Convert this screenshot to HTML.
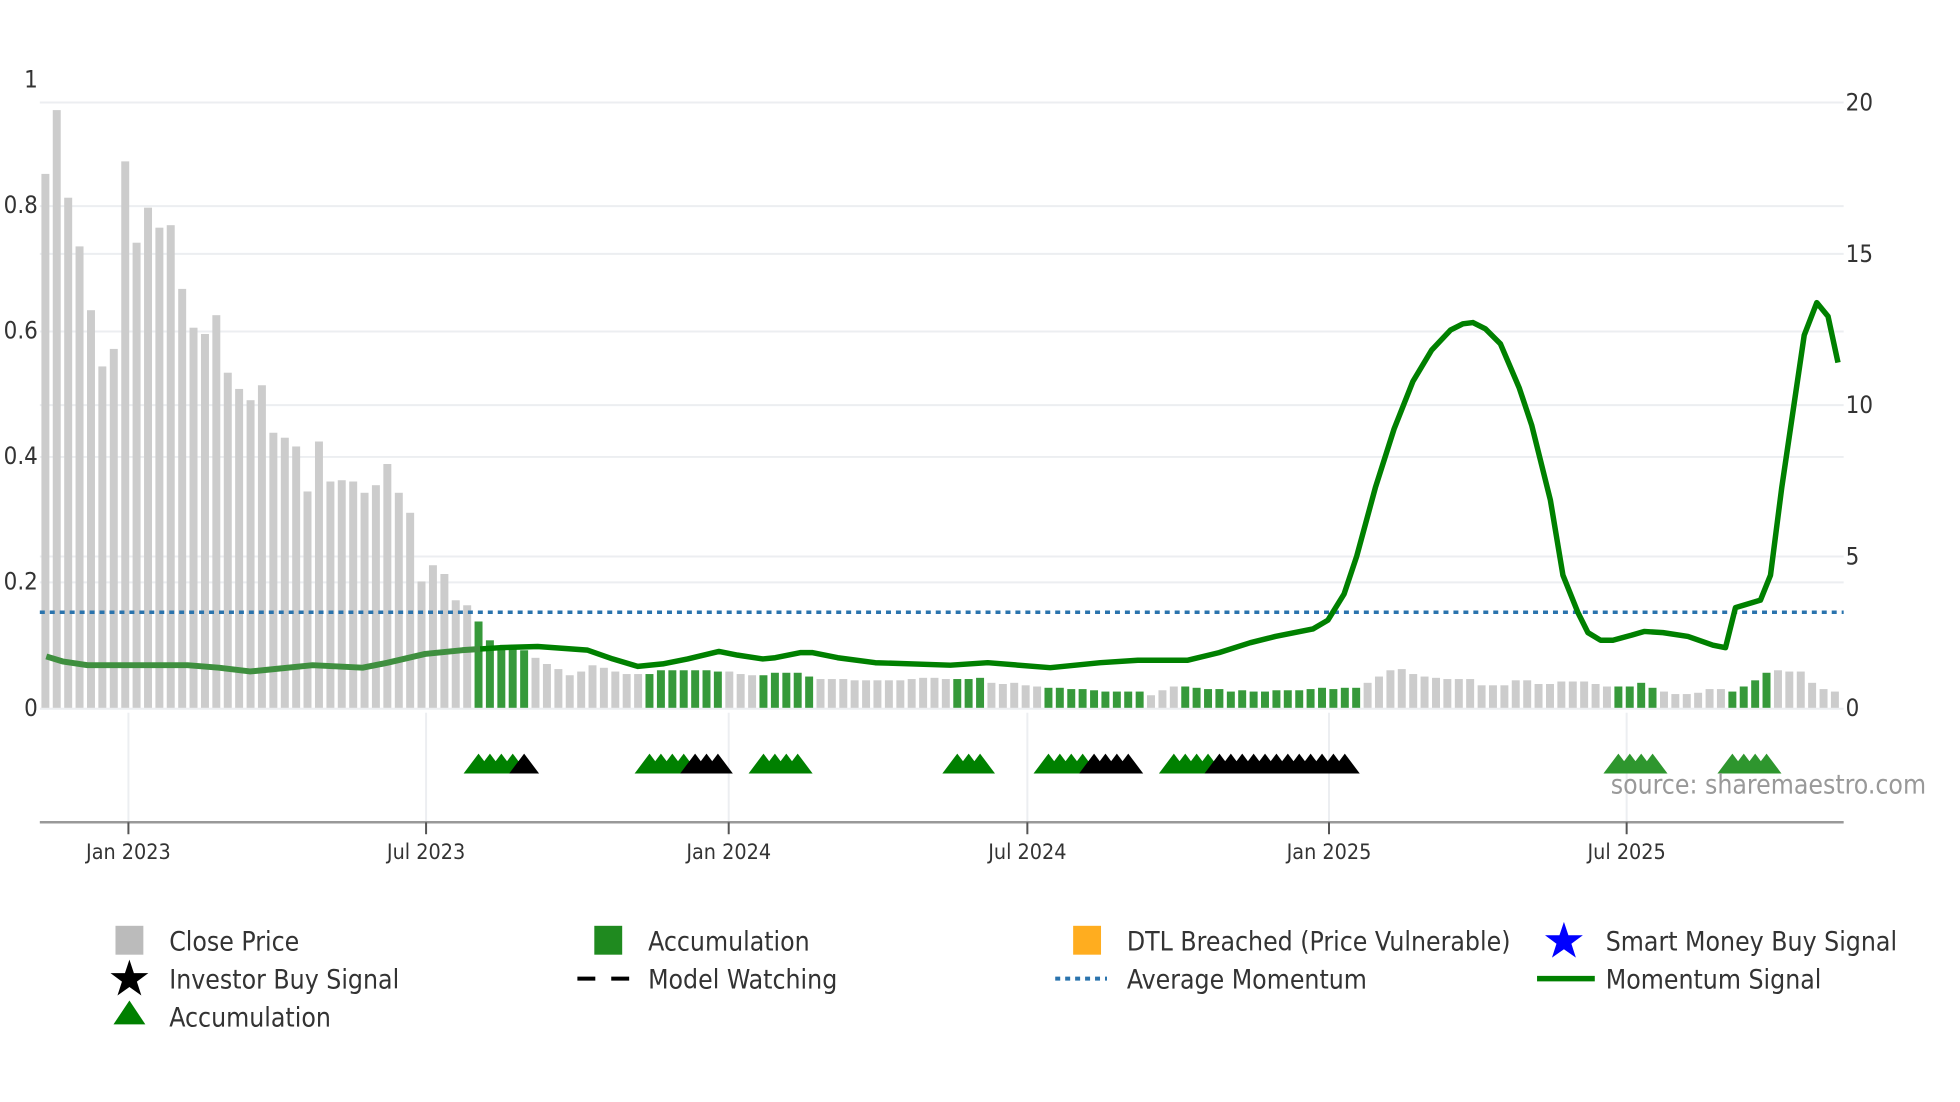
<!DOCTYPE html>
<html><head><meta charset="utf-8">
<style>
html,body{margin:0;padding:0;background:#fff;}
svg{display:block;}
text{font-family:"DejaVu Sans Condensed","DejaVu Sans","Liberation Sans",sans-serif;fill:#333;}
</style></head>
<body>
<svg id="s" width="1960" height="1102" viewBox="0 0 1960 1102" xmlns="http://www.w3.org/2000/svg">
<rect width="1960" height="1102" fill="#fff"/>
<g transform="scale(0.9955)">
<g stroke="#eceef1" stroke-width="2">
<line x1="40" x2="1852" y1="103" y2="103"/>
<line x1="40" x2="1852" y1="207" y2="207"/>
<line x1="40" x2="1852" y1="255" y2="255"/>
<line x1="40" x2="1852" y1="333" y2="333"/>
<line x1="40" x2="1852" y1="407" y2="407"/>
<line x1="40" x2="1852" y1="459" y2="459"/>
<line x1="40" x2="1852" y1="559" y2="559"/>
<line x1="40" x2="1852" y1="585" y2="585"/>
<line x1="40" x2="1852" y1="712" y2="712"/>
</g>
<g stroke="#eceef1" stroke-width="2">
<line x1="129" x2="129" y1="716" y2="826"/>
<line x1="428" x2="428" y1="716" y2="826"/>
<line x1="732" x2="732" y1="716" y2="826"/>
<line x1="1032" x2="1032" y1="716" y2="826"/>
<line x1="1335" x2="1335" y1="716" y2="826"/>
<line x1="1634" x2="1634" y1="716" y2="826"/>
</g>
<g id="bars"></g>
<line x1="40" x2="1852" y1="615" y2="615" stroke="#2a73ad" stroke-width="3.5" stroke-dasharray="5 5"/>
<polyline id="mom1" fill="none" stroke="#3f8f3f" stroke-width="6" stroke-linejoin="round"/>
<polyline id="mom2" fill="none" stroke="#008000" stroke-width="5.5" stroke-linejoin="round"/>
<g id="tris"></g>
<line x1="40" x2="1852" y1="826" y2="826" stroke="#999" stroke-width="2.5"/>
<g stroke="#555" stroke-width="2">
<line x1="129" x2="129" y1="826" y2="838"/>
<line x1="428" x2="428" y1="826" y2="838"/>
<line x1="732" x2="732" y1="826" y2="838"/>
<line x1="1032" x2="1032" y1="826" y2="838"/>
<line x1="1335" x2="1335" y1="826" y2="838"/>
<line x1="1634" x2="1634" y1="826" y2="838"/>
</g>
<g font-size="21.5" text-anchor="middle">
<text x="129" y="863">Jan 2023</text>
<text x="428" y="863">Jul 2023</text>
<text x="732" y="863">Jan 2024</text>
<text x="1032" y="863">Jul 2024</text>
<text x="1335" y="863">Jan 2025</text>
<text x="1634" y="863">Jul 2025</text>
</g>
<g font-size="24" text-anchor="end">
<text x="38" y="88">1</text>
<text x="38" y="214">0.8</text>
<text x="38" y="340">0.6</text>
<text x="38" y="466">0.4</text>
<text x="38" y="592">0.2</text>
<text x="38" y="719">0</text>
</g>
<g font-size="24">
<text x="1854" y="111">20</text>
<text x="1854" y="263">15</text>
<text x="1854" y="415">10</text>
<text x="1854" y="567">5</text>
<text x="1854" y="719">0</text>
</g>
<text x="1618" y="797" font-size="26.5" style="fill:#999">source: sharemaestro.com</text>

<g font-size="26.5">
<rect x="116" y="930" width="28" height="29" fill="#bbb"/>
<text x="170" y="955">Close Price</text>
<rect x="597" y="930" width="28" height="29" fill="#1f8a1f"/>
<text x="651" y="955">Accumulation</text>
<rect x="1078" y="930" width="28" height="29" fill="#ffad1f"/>
<text x="1132" y="955">DTL Breached (Price Vulnerable)</text>
<polygon fill="#0000ff" points="1571,926 1575.5,939.5 1590,939.5 1578.5,948 1583,962 1571,953.5 1559,962 1563.5,948 1552,939.5 1566.5,939.5"/>
<text x="1613" y="955">Smart Money Buy Signal</text>

<polygon fill="#000" points="130,964 134.5,977.5 149,977.5 137.5,986 142,1000 130,991.5 118,1000 122.5,986 111,977.5 125.5,977.5"/>
<text x="170" y="993">Investor Buy Signal</text>
<line x1="580" x2="640" y1="983" y2="983" stroke="#000" stroke-width="4" stroke-dasharray="18 16"/>
<text x="651" y="993">Model Watching</text>
<line x1="1060" x2="1112" y1="983" y2="983" stroke="#2a73ad" stroke-width="4" stroke-dasharray="5 5"/>
<text x="1132" y="993">Average Momentum</text>
<line x1="1544" x2="1602" y1="983" y2="983" stroke="#008000" stroke-width="5.5"/>
<text x="1613" y="993">Momentum Signal</text>

<polygon fill="#008000" points="130,1005 146,1029 114,1029"/>
<text x="170" y="1031">Accumulation</text>
</g>
</g>
</svg>
<script>
(function(){
var NS="http://www.w3.org/2000/svg";
var gray=[427,478,408,369,318,273,287,437,372,400,384,386,335,304,299,314,268,255,246,258,220,216,209,173,213,181,182,181,172,178,195,172,156,101,114,107,86,82];
var H=[],G=[];
function add(arr,g){for(var i=0;i<arr.length;i++){H.push(arr[i]);G.push(g);}}
add(gray,0);
add([69,54,49,50,46],1);
add([40,35,31,26,29,34,32,29,27,27],0);
add([27,30,30,30,30,30,29],1);
add([29,27,26],0);
add([26,28,28,28,25],1);
add([23,23,23,22,22,22,22,22,23,24,24,23],0);
add([23,23,24],1);
add([20,19,20,18,17],0);
add([16,16,15,15,14,13,13,13,13],1);
add([10,14,17],0);
add([17,16,15,15,13,14,13,13,14,14,14,15,16,15,16,16],1);
add([20,25,30,31,27,25,24,23,23,23,18,18,18,22,22,19,19,21,21,21,19,17],0);
add([17,17,20,16],1);
add([13,11,11,12,15,15],0);
add([13,17,22,28],1);
add([30,29,29,20,15,13],0);
var bars=document.getElementById('bars');
function bx(i){return 45.6+11.45*i;}
for(var i=0;i<H.length;i++){
 var h=H[i]*1.256; var r=document.createElementNS(NS,'rect');
 r.setAttribute('x',(bx(i)-4).toFixed(1)); r.setAttribute('width','8');
 r.setAttribute('y',(711-h).toFixed(1)); r.setAttribute('height',h.toFixed(1));
 r.setAttribute('fill',G[i]?'#36993a':'#cccccc'); bars.appendChild(r);
}
var P=[[37,525],[50,529],[70,532],[100,532],[150,532],[175,534],[200,537],[220,535],[250,532],[290,534],[310,530],[340,523],[370,520],[384,519],[400,518],[430,517],[470,520],[490,527],[510,533],[530,531],[550,527],[575,521],[590,524],[610,527],[620,526],[640,522],[650,522],[670,526],[700,530],[760,532],[790,530],[840,534],[860,532],[880,530],[910,528],[950,528],[975,522],[1000,514],[1020,509],[1050,503],[1062,496],[1075,475],[1085,445],[1100,390],[1115,343],[1130,305],[1145,280],[1160,264],[1170,259],[1178,258],[1188,263],[1200,275],[1215,310],[1225,340],[1240,400],[1250,460],[1262,490],[1270,506],[1280,512],[1290,512],[1305,508],[1315,505],[1330,506],[1350,509],[1370,516],[1380,518],[1388,486],[1398,483],[1408,480],[1416,460],[1425,390],[1435,322],[1443,268],[1453,242],[1462,253],[1470,290]];
var a=[],b=[];
P.forEach(function(p){var s=(p[0]*1.256).toFixed(1)+','+(p[1]*1.256).toFixed(1);
 if(p[0]<=384)a.push(s); if(p[0]>=384)b.push(s);});
document.getElementById('mom1').setAttribute('points',a.join(' '));
document.getElementById('mom2').setAttribute('points',b.join(' '));
var tris=document.getElementById('tris');
function tri(i,c){var x=bx(i);var p=document.createElementNS(NS,'polygon');
 p.setAttribute('points',(x-15)+',777 '+x+',757 '+(x+15)+',777');p.setAttribute('fill',c);tris.appendChild(p);}
var grp=[[38,41,'#008000'],[42,42,'#000'],[53,56,'#008000'],[57,59,'#000'],[63,66,'#008000'],[80,82,'#008000'],[88,91,'#008000'],[92,95,'#000'],[99,102,'#008000'],[103,114,'#000'],[138,141,'#2e962e'],[148,151,'#2e962e']];
grp.forEach(function(g){for(var i=g[0];i<=g[1];i++)tri(i,g[2]);});
})();
</script>
</body></html>
